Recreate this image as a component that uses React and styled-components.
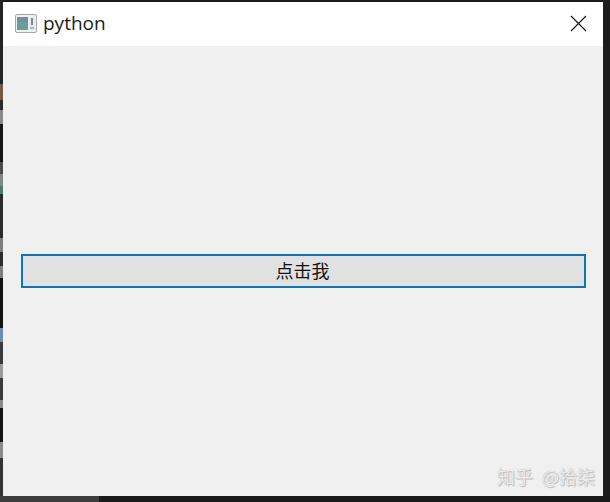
import React from 'react';
import styled, { createGlobalStyle } from 'styled-components';

const GlobalStyle = createGlobalStyle`
    html, body {
        margin: 0;
        padding: 0;
        background: #1c1c1c;
    }
`;

// fundo escuro do editor atrás da janela
const Desktop = styled.div`
    width: 610px;
    height: 502px;
    overflow: hidden;
    display: flex;
    flex-direction: column;
    font-family: "Open Sans", "Noto Sans CJK SC", sans-serif;
`;

const MainRow = styled.div`
    display: flex;
    height: 496px;
`;

const EditorEdge = styled.div`
    width: 3px;
    display: flex;
    flex-direction: column;
`;

const EdgeBit = styled.div`
    height: ${props => props.size}px;
    background: ${props => props.color};
`;

const Window = styled.div`
    width: 600px;
    margin-top: 2px;
    display: flex;
    flex-direction: column;
    background: #f0f0f0;
`;

const TitleBar = styled.header`
    height: 44px;
    flex: none;
    display: flex;
    align-items: center;
    padding: 0 16px 2px 12px;
    box-sizing: border-box;
    background: #ffffff;
`;

const AppIcon = styled.svg`
    width: 22px;
    height: 19px;
    margin-right: 6px;
`;

const Title = styled.h1`
    margin: 0;
    flex: 1;
    font-size: 19px;
    font-weight: 400;
    color: #1a1a1a;
`;

const CloseIcon = styled.svg`
    width: 17px;
    height: 17px;
`;

const Content = styled.main`
    flex: 1;
    display: flex;
    align-items: center;
    padding: 0 17px 0 18px;
`;

const Botao = styled.button`
    width: 100%;
    height: 34px;
    padding: 0 2px 2px 0;
    box-sizing: border-box;
    border: 2px solid #0f74b4;
    background: #e1e1e1;
    color: #111;
    font-family: "Noto Sans CJK SC", sans-serif;
    font-size: 18px;
    line-height: 1;
`;

const Watermark = styled.span`
    position: absolute;
    left: 497px;
    top: 465px;
    display: flex;
    gap: 9px;
    font-family: "Noto Sans CJK SC", sans-serif;
    font-size: 18px;
    line-height: 22px;
    white-space: pre;
    color: #ececec;
    text-shadow: 0 0 1px #a8a8a8, 1px 1px 1px #bcbcbc;
`;

const BottomEdge = styled.div`
    height: 6px;
    flex: none;
    display: flex;
`;

const BottomPiece = styled.div`
    width: ${props => props.size}px;
    background: ${props => props.color};
`;

const edgeBits = [
    [84, '#242424'], [16, '#6f5a4c'], [10, '#2a2a2a'], [14, '#8a8a8a'], [38, '#161616'],
    [12, '#4c4c4c'], [12, '#7a8a82'], [8, '#54786a'], [44, '#2b2b2b'], [14, '#7d7d7d'],
    [14, '#2b2b2b'], [12, '#7d7d7d'], [50, '#111111'], [14, '#6f8cb0'], [22, '#3a3a3a'],
    [14, '#9a9a9a'], [22, '#3a3a3a'], [8, '#8a8a8a'], [34, '#141414'], [16, '#8a8a8a'],
    [38, '#333333'],
];

export default function App() {
    return (
        <Desktop>
            <GlobalStyle />
            <MainRow>
                <EditorEdge>
                    {edgeBits.map(([size, color], i) => (
                        <EdgeBit key={i} size={size} color={color} />
                    ))}
                </EditorEdge>
                <Window>
                    <TitleBar>
                        <AppIcon viewBox="0 0 22 19">
                            <rect x="0.5" y="0.5" width="21" height="18" rx="1.5" fill="#eef1f1" stroke="#a3a9ab" />
                            <rect x="2" y="3" width="11" height="13" fill="#6d9c9b" />
                            <rect x="2" y="3" width="11" height="5" fill="#6f8fa3" />
                            <rect x="14" y="3" width="6" height="13" fill="#e6ebeb" />
                            <rect x="16" y="4" width="2" height="7" fill="#7c898d" />
                            <rect x="15" y="13" width="4" height="2" fill="#9dbcb9" />
                        </AppIcon>
                        <Title>python</Title>
                        <CloseIcon viewBox="0 0 17 17">
                            <path d="M1 1L16 16M16 1L1 16" stroke="#111" strokeWidth="1.1" fill="none" />
                        </CloseIcon>
                    </TitleBar>
                    <Content>
                        <Botao>点击我</Botao>
                    </Content>
                </Window>
            </MainRow>
            <BottomEdge>
                <BottomPiece size={99} color="#3c3c3c" />
                <BottomPiece size={511} color="#1a1a1a" />
            </BottomEdge>
            <Watermark><span>知乎</span><span>@拾柒</span></Watermark>
        </Desktop>
    );
}
